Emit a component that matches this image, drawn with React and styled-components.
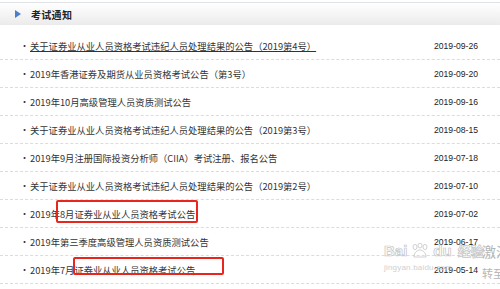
import React from "react";
import styled, { createGlobalStyle } from "styled-components";

const GlobalStyle = createGlobalStyle`
  html, body {
    margin: 0;
    padding: 0;
    background: #fff;
  }
  body {
    width: 500px;
    height: 289px;
    overflow: hidden;
    font-family: "Noto Sans CJK SC", "Liberation Sans", sans-serif;
  }
`;

const notices = [
  { title: "关于证券业从业人员资格考试违纪人员处理结果的公告（2019第4号）", date: "2019-09-26", hover: true },
  { title: "2019年香港证券及期货从业员资格考试公告（第3号）", date: "2019-09-20" },
  { title: "2019年10月高级管理人员资质测试公告", date: "2019-09-16" },
  { title: "关于证券业从业人员资格考试违纪人员处理结果的公告（2019第3号）", date: "2019-08-15" },
  { title: "2019年9月注册国际投资分析师（CIIA）考试注册、报名公告", date: "2019-07-18" },
  { title: "关于证券业从业人员资格考试违纪人员处理结果的公告（2019第2号）", date: "2019-07-10" },
  { title: "2019年8月证券业从业人员资格考试公告", date: "2019-07-02", mark: { left: 56, top: 0, width: 142, height: 23 } },
  { title: "2019年第三季度高级管理人员资质测试公告", date: "2019-06-17" },
  { title: "2019年7月证券业从业人员资格考试公告", date: "2019-05-14", mark: { left: 73, top: 1, width: 151, height: 18 } },
];

const Panel = styled.div`
  position: relative;
  margin-top: 2px;
  border-top: 1px solid #dfe2e6;
`;

const Header = styled.div`
  display: flex;
  align-items: center;
  gap: 10px;
  height: 22px;
  padding-left: 15px;
  background: linear-gradient(to bottom, #ffffff 0%, #f6f6f6 45%, #ebebeb 100%);
`;

const Arrow = styled.span`
  width: 0;
  height: 0;
  border-top: 4px solid transparent;
  border-bottom: 4px solid transparent;
  border-left: 6px solid #4a7fd0;
`;

const Title = styled.h3`
  margin: 0;
  font-size: 10px;
  font-weight: 700;
  color: #222;
  letter-spacing: 0.3px;
`;

const List = styled.ul`
  list-style: none;
  margin: 7px 0 0;
  padding: 0;
`;

const Row = styled.li`
  position: relative;
  display: flex;
  align-items: center;
  height: 27px;
  padding: 0 22px 0 20px;
  border-bottom: 1px dashed #dcdcdc;
  font-size: 9.3px;
  color: #333;
`;

const Bullet = styled.span`
  width: 10px;
  font-size: 9px;
  color: #333;
`;

const Link = styled.a`
  flex: 1;
  color: #333;
  text-decoration: ${(p) => (p.$hover ? "underline" : "none")};
  white-space: nowrap;
`;

const DateText = styled.span`
  font-family: "Liberation Sans", sans-serif;
  font-size: 8.6px;
  color: #222;
`;

const Mark = styled.span`
  position: absolute;
  border: 2px solid #e8261e;
  border-radius: 2px;
  pointer-events: none;
`;

const Watermark = styled.div`
  position: absolute;
  left: 384px;
  top: 240px;
  display: flex;
  flex-direction: column;
  color: #c8c8c8;
  pointer-events: none;
`;

const Brand = styled.div`
  display: flex;
  align-items: center;
  gap: 2px;
  font-family: "Liberation Sans", sans-serif;
  font-size: 15px;
  font-weight: 700;
  color: transparent;
  -webkit-text-stroke: 0.7px #c4c4c4;
  line-height: 16px;
`;

const BrandCn = styled.span`
  font-family: "Noto Sans CJK SC", sans-serif;
  font-size: 13px;
  margin-left: 4px;
`;

const Domain = styled.div`
  font-family: "Liberation Sans", sans-serif;
  font-size: 8px;
  color: #cfcfcf;
  margin-top: 4px;
  letter-spacing: 0.2px;
`;

const Activate = styled.div`
  position: absolute;
  left: 482px;
  top: 238px;
  display: flex;
  flex-direction: column;
  gap: 4px;
  color: #b5b5b5;
  white-space: nowrap;
  pointer-events: none;
`;

const ActivateMain = styled.span`
  font-size: 14px;
`;

const ActivateSub = styled.span`
  font-size: 11px;
`;

const Paw = () => (
  <svg width="22" height="16" viewBox="0 0 22 16" fill="none" stroke="#c4c4c4" strokeWidth="0.8">
    <ellipse cx="6" cy="4" rx="2" ry="2.6" />
    <ellipse cx="11" cy="2.6" rx="2" ry="2.4" />
    <ellipse cx="16" cy="4" rx="2" ry="2.6" />
    <path d="M5 14 C5 9 9 7 11 7 C13 7 17 9 17 14 Z" />
  </svg>
);

export default function App() {
  return (
    <>
      <GlobalStyle />
      <Panel>
        <Header>
          <Arrow />
          <Title>考试通知</Title>
        </Header>
        <List>
          {notices.map((n) => (
            <Row key={n.title + n.date}>
              <Bullet>·</Bullet>
              <Link $hover={n.hover}>{n.title}</Link>
              <DateText>{n.date}</DateText>
              {n.mark && (
                <Mark
                  style={{
                    left: n.mark.left,
                    top: n.mark.top,
                    width: n.mark.width - 4,
                    height: n.mark.height - 4,
                  }}
                />
              )}
            </Row>
          ))}
        </List>
        <Watermark>
          <Brand>
            Bai
            <Paw />
            du
            <BrandCn>经验</BrandCn>
          </Brand>
          <Domain>jingyan.baidu.com</Domain>
        </Watermark>
        <Activate>
          <ActivateMain>激活</ActivateMain>
          <ActivateSub>转至</ActivateSub>
        </Activate>
      </Panel>
    </>
  );
}
